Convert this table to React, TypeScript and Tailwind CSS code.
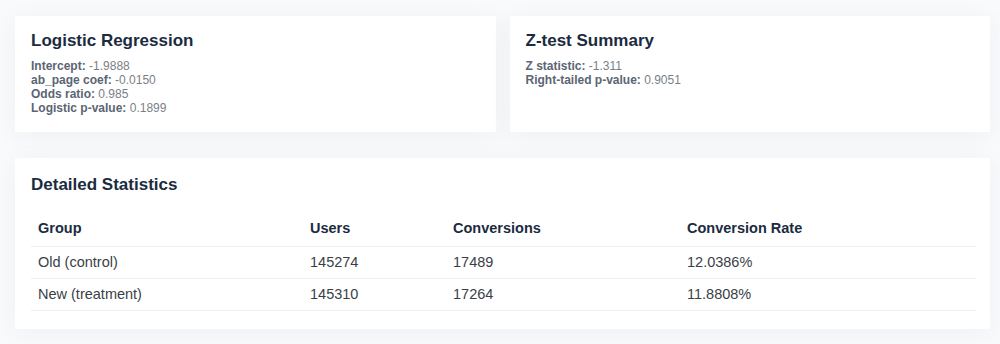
import React from 'react';

const StatLine: React.FC<{ label: string; value: string }> = ({ label, value }) => (
  <div>
    <span className="font-bold text-[#5b6573]">{label}:</span>{' '}
    <span className="text-[#7a7f87]">{value}</span>
  </div>
);

const App: React.FC = () => {
  const rows = [
    { group: 'Old (control)', users: '145274', conversions: '17489', rate: '12.0386%' },
    { group: 'New (treatment)', users: '145310', conversions: '17264', rate: '11.8808%' },
  ];

  return (
    <div
      className="min-h-screen bg-[#f9fafc] pl-[15px] pr-[10px] pt-[16px]"
      style={{ fontFamily: '"Liberation Sans", Arial, sans-serif' }}
    >
      <div className="grid grid-cols-2 gap-[14px]">
        <div className="bg-white h-[116px] px-4 pt-[15px] shadow-[0_4px_24px_rgba(30,50,80,0.05)]">
          <h3 className="text-[17px] leading-[20px] font-bold text-[#1b2b40] mb-[8px]">Logistic Regression</h3>
          <div className="text-[12px] leading-[14px]">
            <StatLine label="Intercept" value="-1.9888" />
            <StatLine label="ab_page coef" value="-0.0150" />
            <StatLine label="Odds ratio" value="0.985" />
            <StatLine label="Logistic p-value" value="0.1899" />
          </div>
        </div>
        <div className="bg-white h-[116px] px-4 pt-[15px] shadow-[0_4px_24px_rgba(30,50,80,0.05)]">
          <h3 className="text-[17px] leading-[20px] font-bold text-[#1b2b40] mb-[8px]">Z-test Summary</h3>
          <div className="text-[12px] leading-[14px]">
            <StatLine label="Z statistic" value="-1.311" />
            <StatLine label="Right-tailed p-value" value="0.9051" />
          </div>
        </div>
      </div>

      <div className="mt-[26px] bg-white pl-4 pr-[14px] pt-[17px] pb-[18px] shadow-[0_4px_24px_rgba(30,50,80,0.05)]">
        <h3 className="text-[17px] leading-[20px] font-bold text-[#1b2b40] mb-[16px]">Detailed Statistics</h3>
        <table className="w-full border-collapse text-[14.5px] leading-[15px]">
          <thead>
            <tr className="border-b border-[#eceff3] text-left text-[#1b2b40]">
              <th className="w-[271px] px-[7px] py-[10px] font-bold">Group</th>
              <th className="w-[143px] px-[8px] py-[10px] font-bold">Users</th>
              <th className="w-[234px] px-[8px] py-[10px] font-bold">Conversions</th>
              <th className="px-[8px] py-[10px] font-bold">Conversion Rate</th>
            </tr>
          </thead>
          <tbody className="text-[#3a3f47]">
            {rows.map((r) => (
              <tr key={r.group} className="border-b border-[#eceff3]">
                <td className="px-[7px] py-[8px]">{r.group}</td>
                <td className="px-[8px] py-[8px]">{r.users}</td>
                <td className="px-[8px] py-[8px]">{r.conversions}</td>
                <td className="px-[8px] py-[8px]">{r.rate}</td>
              </tr>
            ))}
          </tbody>
        </table>
      </div>
    </div>
  );
};

export default App;
